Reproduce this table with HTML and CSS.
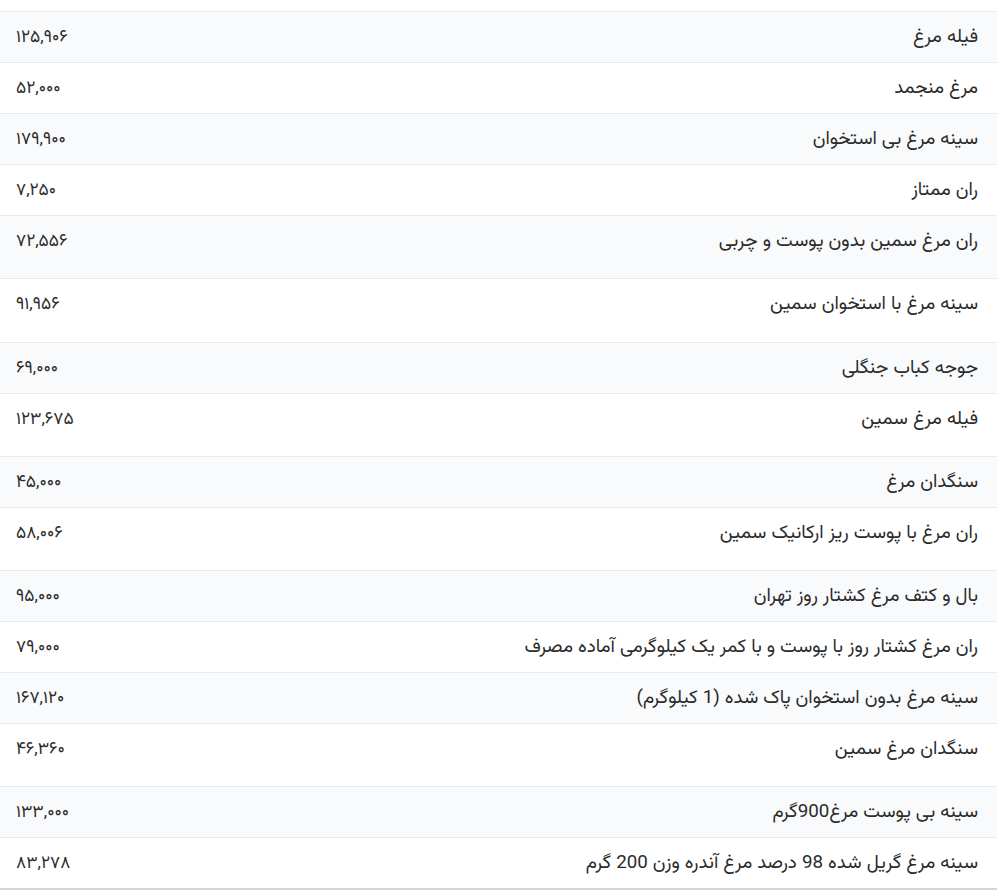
FILE: index.html
```html
<!DOCTYPE html>
<html lang="fa" dir="rtl">
<head>
<meta charset="utf-8">
<link rel="stylesheet" href="styles.css">
</head>
<body>
<div class="spacer"></div>
<table class="prices">
<tbody>
<tr><td class="name">فیله مرغ</td><td class="price">۱۲۵,۹۰۶</td></tr>
<tr><td class="name">مرغ منجمد</td><td class="price">۵۲,۰۰۰</td></tr>
<tr><td class="name">سینه مرغ بی استخوان</td><td class="price">۱۷۹,۹۰۰</td></tr>
<tr><td class="name">ران ممتاز</td><td class="price">۷,۲۵۰</td></tr>
<tr class="tall"><td class="name">ران مرغ سمین بدون پوست و چربی</td><td class="price">۷۲,۵۵۶</td></tr>
<tr class="tall"><td class="name">سینه مرغ با استخوان سمین</td><td class="price">۹۱,۹۵۶</td></tr>
<tr><td class="name">جوجه کباب جنگلی</td><td class="price">۶۹,۰۰۰</td></tr>
<tr class="tall"><td class="name">فیله مرغ سمین</td><td class="price">۱۲۳,۶۷۵</td></tr>
<tr><td class="name">سنگدان مرغ</td><td class="price">۴۵,۰۰۰</td></tr>
<tr class="tall"><td class="name">ران مرغ با پوست ریز ارکانیک سمین</td><td class="price">۵۸,۰۰۶</td></tr>
<tr><td class="name">بال و کتف مرغ کشتار روز تهران</td><td class="price">۹۵,۰۰۰</td></tr>
<tr><td class="name">ران مرغ کشتار روز با پوست و با کمر یک کیلوگرمی آماده مصرف</td><td class="price">۷۹,۰۰۰</td></tr>
<tr><td class="name">سینه مرغ بدون استخوان پاک شده (1 کیلوگرم)</td><td class="price">۱۶۷,۱۲۰</td></tr>
<tr class="tall"><td class="name">سنگدان مرغ سمین</td><td class="price">۴۶,۳۶۰</td></tr>
<tr><td class="name">سینه بی پوست مرغ900گرم</td><td class="price">۱۳۳,۰۰۰</td></tr>
<tr><td class="name">سینه مرغ گریل شده 98 درصد مرغ آندره وزن 200 گرم</td><td class="price">۸۳,۲۷۸</td></tr>
</tbody>
</table>
</body>
</html>
```
FILE: styles.css
```css
html, body {
  margin: 0;
  padding: 0;
  background: #ffffff;
}
body {
  font-family: "Vazirmatn", "Noto Sans Arabic", "DejaVu Sans", sans-serif;
  font-size: 17.3px;
  color: #2b2b2b;
}
.spacer {
  height: 11px;
}
.prices {
  width: 100%;
  border-collapse: collapse;
  border-top: 1px solid #e9ecef;
  border-bottom: 2px solid #cfd5dc;
}
.prices td {
  height: 50px;
  box-sizing: border-box;
  padding: 13px 19px 11px 16px;
  line-height: 26px;
  vertical-align: top;
  border-bottom: 1px solid #e9ecef;
}
.prices tr:nth-child(odd) td {
  background: #f9fafb;
}
.prices tr.tall td {
  height: 62.3px;
  padding-bottom: 23.3px;
}
.name {
  text-align: right;
  font-size: 18.8px;
}
.price {
  text-align: left;
  white-space: nowrap;
}
```
